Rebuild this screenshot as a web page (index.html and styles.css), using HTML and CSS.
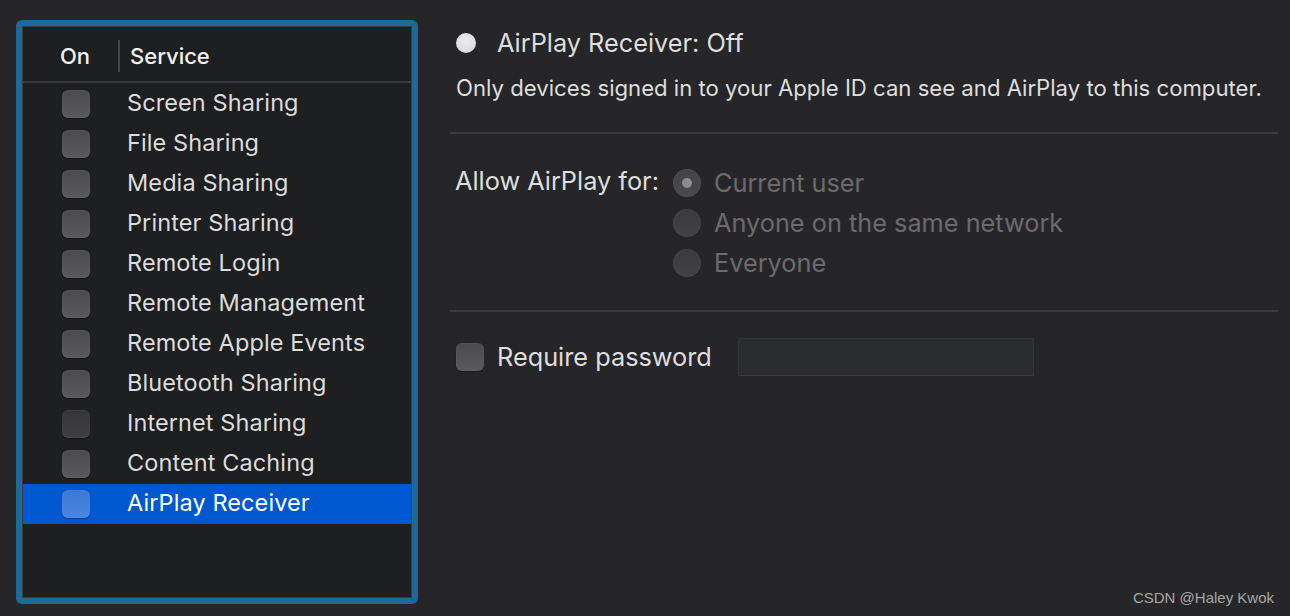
FILE: index.html
```html
<!DOCTYPE html>
<html>
<head>
<meta charset="utf-8">
<link rel="stylesheet" href="styles.css">
</head>
<body>
<div class="window">
  <div class="focus-ring">
    <div class="table">
      <div class="thead">
        <div class="th th-on">On</div>
        <div class="th-sep"></div>
        <div class="th th-service">Service</div>
      </div>
      <div class="tbody">
        <div class="row"><span class="cb"></span><span class="label">Screen Sharing</span></div>
        <div class="row"><span class="cb"></span><span class="label">File Sharing</span></div>
        <div class="row"><span class="cb"></span><span class="label">Media Sharing</span></div>
        <div class="row"><span class="cb"></span><span class="label">Printer Sharing</span></div>
        <div class="row"><span class="cb"></span><span class="label">Remote Login</span></div>
        <div class="row"><span class="cb"></span><span class="label">Remote Management</span></div>
        <div class="row"><span class="cb"></span><span class="label">Remote Apple Events</span></div>
        <div class="row"><span class="cb"></span><span class="label">Bluetooth Sharing</span></div>
        <div class="row"><span class="cb cb-disabled"></span><span class="label">Internet Sharing</span></div>
        <div class="row"><span class="cb"></span><span class="label">Content Caching</span></div>
        <div class="row row-selected"><span class="cb cb-selected"></span><span class="label">AirPlay Receiver</span></div>
      </div>
    </div>
  </div>

  <div class="detail">
    <div class="status">
      <span class="status-dot"></span>
      <span class="status-text">AirPlay Receiver: Off</span>
    </div>
    <p class="desc">Only devices signed in to your Apple ID can see and AirPlay to this computer.</p>
    <div class="sep"></div>
    <div class="allow">
      <div class="allow-label">Allow AirPlay for:</div>
      <div class="radios">
        <div class="radio-row"><span class="radio radio-on"><span class="radio-dot"></span></span><span class="radio-label">Current user</span></div>
        <div class="radio-row"><span class="radio"></span><span class="radio-label">Anyone on the same network</span></div>
        <div class="radio-row"><span class="radio"></span><span class="radio-label">Everyone</span></div>
      </div>
    </div>
    <div class="sep sep2"></div>
    <div class="password">
      <span class="cb"></span>
      <span class="pw-label">Require password</span>
      <span class="pw-field"></span>
    </div>
  </div>
</div>
<div class="watermark">CSDN @Haley Kwok</div>
</body>
</html>
```

FILE: styles.css
```css
html, body {
  margin: 0;
  padding: 0;
  width: 1290px;
  height: 616px;
  background: #262628;
  overflow: hidden;
  font-family: Inter, "Noto Sans", "Liberation Sans", sans-serif;
  color: #dedede;
}

.window {
  display: flex;
  align-items: flex-start;
  padding: 20px 12px 0 16px;
  gap: 32px;
}

.focus-ring {
  width: 402px;
  height: 584px;
  box-sizing: border-box;
  padding: 6px;
  background: #1c6a98;
  border-radius: 6px;
  flex: none;
}

.table {
  height: 100%;
  box-sizing: border-box;
  border: 1px solid #3a3b3d;
  background: #1e1f21;
  display: flex;
  flex-direction: column;
}

.thead {
  height: 56px;
  flex: none;
  display: flex;
  align-items: center;
  padding-top: 3px;
  border-bottom: 2px solid #3a3b3d;
  box-sizing: border-box;
}

.th {
  font-size: 22px;
  font-weight: 500;
  color: #f2f2f2;
}

.th-on {
  margin-left: 37px;
  width: 58px;
}

.th-sep {
  width: 2px;
  height: 32px;
  background: #444547;
  margin-right: 10px;
}

.tbody {
  padding-top: 1px;
}

.row {
  height: 40px;
  display: flex;
  align-items: center;
}

.row-selected {
  background: #0058d0;
}

.cb {
  width: 28px;
  height: 28px;
  box-sizing: border-box;
  border-radius: 6px;
  background: linear-gradient(#4b4b4d, #5a5a5c);
  box-shadow: inset 0 0 0 1px rgba(255,255,255,0.04), 0 1px 1px rgba(0,0,0,0.35);
  flex: none;
}

.row .cb {
  margin-left: 39px;
  margin-right: 37px;
}

.cb-disabled {
  background: linear-gradient(#363638, #3f3f41);
}

.cb-selected {
  background: linear-gradient(#3a78d8, #4a86e0);
}

.label {
  font-size: 23.5px;
  color: #dcdcdc;
  letter-spacing: 0.1px;
  padding-bottom: 4px;
}

.row-selected .label {
  color: #ffffff;
}

.detail {
  flex: 1;
  display: flex;
  flex-direction: column;
}

.status {
  display: flex;
  align-items: center;
  height: 30px;
  margin-top: 8px;
  padding-left: 6px;
}

.status-dot {
  width: 20px;
  height: 20px;
  border-radius: 50%;
  background: radial-gradient(circle at 50% 40%, #ececec, #d6d6d6);
  margin-right: 21px;
}

.status-text {
  font-size: 25.3px;
  color: #dedede;
  padding-bottom: 2px;
}

.desc {
  margin: 15px 0 0 6px;
  font-size: 22.15px;
  line-height: 30px;
  color: #dedede;
}

.sep {
  height: 2px;
  background: #3a3b3d;
  margin-top: 29px;
}

.allow {
  display: flex;
  margin-top: 29px;
  padding-left: 5px;
}

.allow-label {
  font-size: 25.3px;
  color: #dedede;
  width: 218px;
  line-height: 40px;
  margin-top: -2px;
}

.radios {
  display: flex;
  flex-direction: column;
}

.radio-row {
  display: flex;
  align-items: center;
  height: 40px;
}

.radio {
  width: 28px;
  height: 28px;
  border-radius: 50%;
  box-sizing: border-box;
  background: linear-gradient(#3b3b3d, #424244);
  box-shadow: inset 0 0 0 1px rgba(255,255,255,0.03);
  display: flex;
  align-items: center;
  justify-content: center;
  margin-right: 13px;
}

.radio-on {
  background: linear-gradient(#444446, #4a4a4c);
}

.radio-dot {
  width: 10px;
  height: 10px;
  border-radius: 50%;
  background: #8c8c8e;
}

.radio-label {
  font-size: 25.3px;
  color: #6b6b6d;
  padding-bottom: 2px;
}

.sep2 {
  margin-top: 27px;
}

.password {
  display: flex;
  align-items: center;
  margin-top: 26px;
  padding-left: 6px;
}

.password .cb {
  margin-right: 13px;
}

.pw-label {
  font-size: 25.3px;
  color: #dedede;
  width: 241px;
  padding-bottom: 2px;
}

.pw-field {
  width: 296px;
  height: 38px;
  box-sizing: border-box;
  background: #2b2c2e;
  border: 1px solid #323335;
  border-bottom-color: #38393b;
}

.watermark {
  position: absolute;
  right: 16px;
  bottom: 10px;
  font-family: "Liberation Sans", Arial, sans-serif;
  font-size: 15px;
  color: #a6a6a6;
}
```
